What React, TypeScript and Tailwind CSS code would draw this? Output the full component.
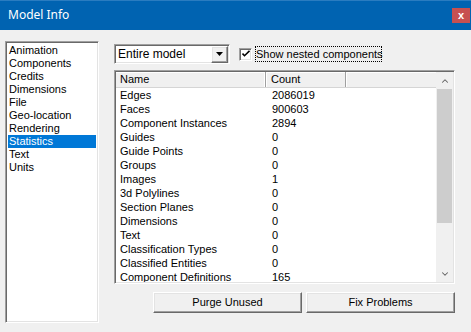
import { ChevronUp, ChevronDown } from 'lucide-react';

const pages = ['Animation', 'Components', 'Credits', 'Dimensions', 'File', 'Geo-location', 'Rendering', 'Statistics', 'Text', 'Units'];

const stats: [string, string][] = [
  ['Edges', '2086019'],
  ['Faces', '900603'],
  ['Component Instances', '2894'],
  ['Guides', '0'],
  ['Guide Points', '0'],
  ['Groups', '0'],
  ['Images', '1'],
  ['3d Polylines', '0'],
  ['Section Planes', '0'],
  ['Dimensions', '0'],
  ['Text', '0'],
  ['Classification Types', '0'],
  ['Classified Entities', '0'],
  ['Component Definitions', '165'],
];

const sunken =
  'border border-t-[#a0a0a0] border-l-[#a0a0a0] border-r-white border-b-white shadow-[inset_1px_1px_0_#696969,inset_-1px_-1px_0_#e3e3e3]';
const raised =
  'border border-t-white border-l-white border-r-[#696969] border-b-[#696969] shadow-[inset_-1px_-1px_0_#a0a0a0,inset_1px_1px_0_#e3e3e3]';

export default function App() {
  return (
    <div className="w-[471px] h-[332px] bg-[#f0f0f0] flex flex-col overflow-hidden font-['Liberation_Sans',Arial,sans-serif] text-[11px] text-black">
      {/* TITLE BAR */}
      <div className="h-[30px] bg-[#0063b1] border-t border-[#2a7cc0] flex items-center justify-between pl-2 pr-px">
        <span className="text-white text-[12px] font-['Noto_Sans',sans-serif] leading-none -mt-px">Model Info</span>
        <div className="w-[18px] h-[15px] bg-[#c75050] text-white text-[11px] font-bold flex items-center justify-center leading-none -mt-px">
          x
        </div>
      </div>

      {/* BODY */}
      <div className="flex pl-[5px] pt-[11px]">
        {/* PAGE LIST */}
        <div className={`w-[94px] h-[282px] bg-white ${sunken} p-px`}>
          <div className="pt-px px-px">
            {pages.map((p) => (
              <div
                key={p}
                className={`h-[13px] leading-[13px] pl-px ${p === 'Statistics' ? 'bg-[#0078d7] text-white' : ''}`}
              >
                {p}
              </div>
            ))}
          </div>
        </div>

        <div className="ml-[15px] w-[341px] flex flex-col pt-[3px]">
          {/* SCOPE + CHECKBOX */}
          <div className="flex items-center h-[20px]">
            <div className={`w-[116px] h-[20px] bg-white ${sunken} flex items-center justify-between pl-[3px] pr-px`}>
              <span className="text-[12px]">Entire model</span>
              <div className={`w-[17px] h-[17px] bg-[#f0f0f0] ${raised} flex items-center justify-center`}>
                <svg width="7" height="4" viewBox="0 0 7 4">
                  <path d="M0 0h7L3.5 4z" fill="#000" />
                </svg>
              </div>
            </div>
            <div className={`ml-[9px] w-[13px] h-[13px] bg-white ${sunken} flex items-center justify-center`}>
              <svg width="8" height="8" viewBox="0 0 8 8">
                <path d="M0.5 3.5l2 2.2L7.5 0.8" stroke="#000" strokeWidth="1.6" fill="none" />
              </svg>
            </div>
            <span className="ml-[3px] w-[127px] h-[16px] leading-[14px] border border-dotted border-black text-[11px] whitespace-nowrap">
              Show nested components
            </span>
          </div>

          {/* STATS TABLE */}
          <div className={`mt-[6px] h-[214px] bg-white ${sunken} p-px flex overflow-hidden`}>
            <div className="flex-1 flex flex-col overflow-hidden">
              <div className="h-[16px] flex bg-[#f0f0f0] border-b border-[#d5d5d5] shrink-0">
                <div className="w-[150px] pl-[4px] leading-[15px] border-r border-[#a0a0a0] shadow-[inset_-1px_0_0_white,inset_0_1px_0_white]">Name</div>
                <div className="w-[80px] pl-[5px] leading-[15px] border-r border-[#a0a0a0] shadow-[inset_1px_0_0_white,inset_0_1px_0_white]">Count</div>
                <div className="flex-1 shadow-[inset_1px_0_0_white,inset_0_1px_0_white]" />
              </div>
              {stats.map(([name, count]) => (
                <div key={name} className="h-[14px] leading-[14px] flex shrink-0">
                  <div className="w-[150px] pl-[4px]">{name}</div>
                  <div className="pl-[6px]">{count}</div>
                </div>
              ))}
            </div>
            {/* SCROLLBAR */}
            <div className="w-[17px] bg-[#f0f0f0] flex flex-col items-center">
              <div className="h-[17px] flex items-center justify-center">
                <ChevronUp size={10} strokeWidth={2.5} color="#606060" />
              </div>
              <div className="w-[15px] h-[134px] bg-[#cdcdcd]" />
              <div className="flex-1" />
              <div className="h-[17px] flex items-center justify-center">
                <ChevronDown size={10} strokeWidth={2.5} color="#606060" />
              </div>
            </div>
          </div>

          {/* BUTTONS */}
          <div className="mt-[8px] flex justify-end gap-[4px]">
            <button className={`w-[149px] h-[21px] bg-[#f0f0f0] ${raised} text-[11px] leading-none`}>Purge Unused</button>
            <button className={`w-[149px] h-[21px] bg-[#f0f0f0] ${raised} text-[11px] leading-none`}>Fix Problems</button>
          </div>
        </div>
      </div>
    </div>
  );
}
